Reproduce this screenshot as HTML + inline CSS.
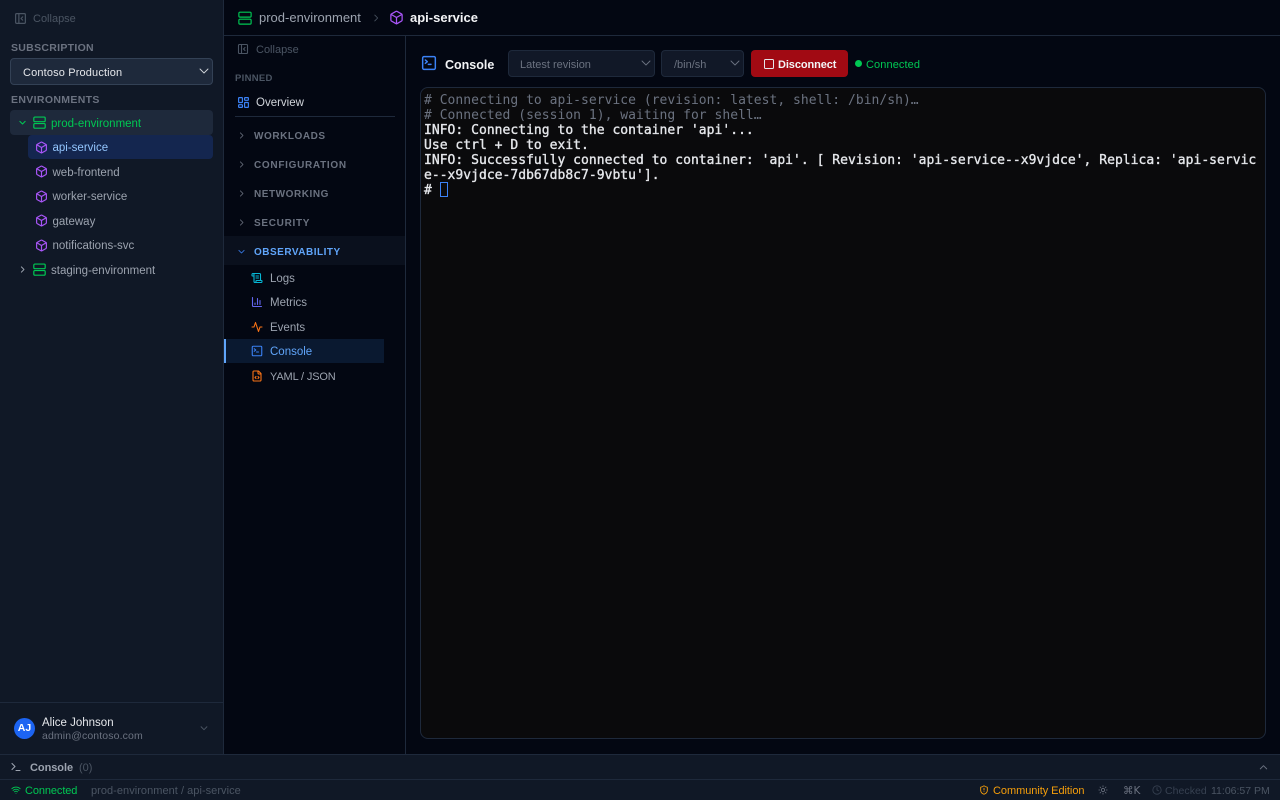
<!DOCTYPE html>
<html><head><meta charset="utf-8"><style>
html,body{margin:0;padding:0;width:1280px;height:800px;overflow:hidden;background:#030712;font-family:"Liberation Sans",sans-serif;}
.box{position:absolute;box-sizing:border-box;}
.t{position:absolute;white-space:nowrap;line-height:16px;margin-top:2px;}
svg{position:absolute;fill:none;stroke-linecap:round;stroke-linejoin:round;}
.mono{position:absolute;left:424px;font-family:"DejaVu Sans Mono",monospace;font-size:13px;line-height:15px;white-space:pre;color:#e5e7eb;-webkit-text-stroke:.35px #e5e7eb;letter-spacing:.025px;}
.g{color:#6b7280;-webkit-text-stroke:0;}
</style></head><body>
<svg width="0" height="0" style="position:absolute"><defs>
<symbol id="cube" viewBox="0 0 24 24"><path d="M21 8a2 2 0 0 0-1-1.73l-7-4a2 2 0 0 0-2 0l-7 4A2 2 0 0 0 3 8v8a2 2 0 0 0 1 1.73l7 4a2 2 0 0 0 2 0l7-4A2 2 0 0 0 21 16Z"/><path d="M3.3 7 12 12l8.7-5"/><path d="M12 22V12"/></symbol>
<symbol id="srv" viewBox="0 0 24 24"><rect x="1.5" y="2" width="21" height="8.5" rx="2"/><rect x="1.5" y="14" width="21" height="8.5" rx="2"/></symbol>
<symbol id="collapse" viewBox="0 0 24 24"><rect x="3" y="3" width="18" height="18" rx="2"/><path d="M9 3v18"/><path d="m16 15-3-3 3-3"/></symbol>
<symbol id="term" viewBox="0 0 24 24"><rect x="2.5" y="2.5" width="19" height="19" rx="2"/><path d="m6.5 7.5 3 2.5-3 2.5"/><path d="M11 14h4"/></symbol>
</defs></svg>

<!-- left sidebar -->
<div class="box" style="left:0;top:0;width:224px;height:754px;background:#101826;border-right:1px solid #1e293b"></div>
<svg style="left:14px;top:12px;stroke:#4b5563;stroke-width:2.2" width="13" height="13"><use href="#collapse"/></svg>
<div class="t" style="left:33px;top:9px;font-size:11px;color:#4b5563">Collapse</div>
<div class="t" style="left:11px;top:38px;font-size:10.5px;font-weight:700;color:#6b7280;letter-spacing:.3px">SUBSCRIPTION</div>
<div class="box" style="left:10px;top:58px;width:203px;height:27px;background:#1e293b;border:1px solid #334155;border-radius:4px"></div>
<div class="t" style="left:23px;top:63px;font-size:11px;color:#e5e7eb;letter-spacing:.15px">Contoso Production</div>
<svg style="left:198px;top:65px;stroke:#d1d5db;stroke-width:1.8" width="12" height="12" viewBox="0 0 24 24"><path d="m4 8 8 8 8-8"/></svg>
<div class="t" style="left:11px;top:90px;font-size:10.5px;font-weight:700;color:#6b7280;letter-spacing:.35px">ENVIRONMENTS</div>

<div class="box" style="left:10px;top:110px;width:203px;height:25px;background:#1e293b;border-radius:4px"></div>
<svg style="left:18px;top:118px;stroke:#00c853;stroke-width:2.8" width="9" height="9" viewBox="0 0 24 24"><path d="m5 9 7 7 7-7"/></svg>
<svg style="left:33px;top:116px;stroke:#00c853;stroke-width:2.2" width="13" height="13"><use href="#srv"/></svg>
<div class="t" style="left:51px;top:114px;font-size:11.5px;color:#00c853">prod-environment</div>

<div class="box" style="left:28px;top:135px;width:185px;height:24px;background:#14264f;border-radius:4px"></div>
<svg style="left:35px;top:141px;stroke:#a855f7;stroke-width:2.2" width="13" height="13"><use href="#cube"/></svg>
<div class="t" style="left:52.5px;top:138px;font-size:11.5px;color:#93c5fd">api-service</div>
<svg style="left:35px;top:165px;stroke:#a855f7;stroke-width:2.2" width="13" height="13"><use href="#cube"/></svg>
<div class="t" style="left:52.5px;top:163px;font-size:11.5px;color:#9ca3af">web-frontend</div>
<svg style="left:35px;top:190px;stroke:#a855f7;stroke-width:2.2" width="13" height="13"><use href="#cube"/></svg>
<div class="t" style="left:52.5px;top:187px;font-size:11.5px;color:#9ca3af">worker-service</div>
<svg style="left:35px;top:214px;stroke:#a855f7;stroke-width:2.2" width="13" height="13"><use href="#cube"/></svg>
<div class="t" style="left:52.5px;top:212px;font-size:11.5px;color:#9ca3af">gateway</div>
<svg style="left:35px;top:239px;stroke:#a855f7;stroke-width:2.2" width="13" height="13"><use href="#cube"/></svg>
<div class="t" style="left:52.5px;top:236px;font-size:11.5px;color:#9ca3af">notifications-svc</div>
<svg style="left:18px;top:265px;stroke:#9ca3af;stroke-width:2.4" width="9" height="9" viewBox="0 0 24 24"><path d="m9 5 7 7-7 7"/></svg>
<svg style="left:33px;top:263px;stroke:#00c853;stroke-width:2.2" width="13" height="13"><use href="#srv"/></svg>
<div class="t" style="left:51px;top:261px;font-size:11.5px;color:#9ca3af">staging-environment</div>

<div class="box" style="left:0;top:702px;width:223px;height:1px;background:#1e293b"></div>
<div class="box" style="left:14px;top:718px;width:21px;height:21px;border-radius:50%;background:#1c64f2;color:#fff;font-size:10.5px;font-weight:700;text-align:center;line-height:21px">AJ</div>
<div class="t" style="left:42px;top:713px;font-size:11.5px;color:#e5e7eb">Alice Johnson</div>
<div class="t" style="left:42px;top:726px;font-size:10.5px;color:#6b7280;letter-spacing:.12px">admin@contoso.com</div>
<svg style="left:199px;top:723px;stroke:#4b5563;stroke-width:2.2" width="10" height="10" viewBox="0 0 24 24"><path d="m5 9 7 7 7-7"/></svg>

<!-- header -->
<div class="box" style="left:224px;top:35px;width:1056px;height:1px;background:#1e293b"></div>
<svg style="left:238px;top:11px;stroke:#00c853;stroke-width:2" width="14" height="14"><use href="#srv"/></svg>
<div class="t" style="left:259px;top:8px;font-size:13px;color:#9ca3af">prod-environment</div>
<svg style="left:371px;top:13px;stroke:#4b5563;stroke-width:2" width="10" height="10" viewBox="0 0 24 24"><path d="m9 5 7 7-7 7"/></svg>
<svg style="left:389px;top:10px;stroke:#a855f7;stroke-width:2" width="15" height="15"><use href="#cube"/></svg>
<div class="t" style="left:410px;top:8px;font-size:13px;font-weight:700;color:#f3f4f6">api-service</div>

<!-- nav column -->
<div class="box" style="left:405px;top:36px;width:1px;height:718px;background:#1e293b"></div>
<svg style="left:237px;top:43px;stroke:#4b5563;stroke-width:2.2" width="12" height="12"><use href="#collapse"/></svg>
<div class="t" style="left:256px;top:40px;font-size:11px;color:#4b5563">Collapse</div>
<div class="t" style="left:235px;top:69px;font-size:9.5px;font-weight:700;color:#4b5563;letter-spacing:.3px">PINNED</div>
<svg style="left:237px;top:96px;stroke:#3b82f6;stroke-width:2.2" width="13" height="13" viewBox="0 0 24 24"><rect x="3" y="3" width="7" height="9" rx="1"/><rect x="14" y="3" width="7" height="5" rx="1"/><rect x="14" y="12" width="7" height="9" rx="1"/><rect x="3" y="16" width="7" height="5" rx="1"/></svg>
<div class="t" style="left:256px;top:93px;font-size:11.5px;color:#d1d5db">Overview</div>
<div class="box" style="left:235px;top:116px;width:160px;height:1px;background:#1e293b"></div>

<svg style="left:237px;top:131px;stroke:#6b7280;stroke-width:2.2" width="9" height="9" viewBox="0 0 24 24"><path d="m9 5 7 7-7 7"/></svg>
<div class="t" style="left:254px;top:126.5px;font-size:10px;font-weight:700;color:#6b7280;letter-spacing:.55px">WORKLOADS</div>
<svg style="left:237px;top:160px;stroke:#6b7280;stroke-width:2.2" width="9" height="9" viewBox="0 0 24 24"><path d="m9 5 7 7-7 7"/></svg>
<div class="t" style="left:254px;top:155.5px;font-size:10px;font-weight:700;color:#6b7280;letter-spacing:.7px">CONFIGURATION</div>
<svg style="left:237px;top:189px;stroke:#6b7280;stroke-width:2.2" width="9" height="9" viewBox="0 0 24 24"><path d="m9 5 7 7-7 7"/></svg>
<div class="t" style="left:254px;top:184.5px;font-size:10px;font-weight:700;color:#6b7280;letter-spacing:.55px">NETWORKING</div>
<svg style="left:237px;top:218px;stroke:#6b7280;stroke-width:2.2" width="9" height="9" viewBox="0 0 24 24"><path d="m9 5 7 7-7 7"/></svg>
<div class="t" style="left:254px;top:213.5px;font-size:10px;font-weight:700;color:#6b7280;letter-spacing:.7px">SECURITY</div>

<div class="box" style="left:224px;top:236px;width:181px;height:29px;background:#0a101d"></div>
<svg style="left:237px;top:247px;stroke:#3b82f6;stroke-width:2.2" width="9" height="9" viewBox="0 0 24 24"><path d="m5 9 7 7 7-7"/></svg>
<div class="t" style="left:254px;top:242.5px;font-size:10px;font-weight:700;color:#60a5fa;letter-spacing:.5px">OBSERVABILITY</div>

<svg style="left:251px;top:272px;stroke:#06b6d4;stroke-width:2.2" width="12" height="12" viewBox="0 0 24 24"><path d="M15 12h-5"/><path d="M15 8h-5"/><path d="M19 17V5a2 2 0 0 0-2-2H4"/><path d="M8 21h12a2 2 0 0 0 2-2v-1a1 1 0 0 0-1-1H11a1 1 0 0 0-1 1v1a2 2 0 1 1-4 0V5a2 2 0 1 0-4 0v2a1 1 0 0 0 1 1h3"/></svg>
<div class="t" style="left:270px;top:269px;font-size:11.5px;color:#9ca3af">Logs</div>
<svg style="left:251px;top:296px;stroke:#6366f1;stroke-width:2.2" width="12" height="12" viewBox="0 0 24 24"><path d="M3 3v16a2 2 0 0 0 2 2h16"/><path d="M18 17V9"/><path d="M13 17V5"/><path d="M8 17v-3"/></svg>
<div class="t" style="left:270px;top:293px;font-size:11.5px;color:#9ca3af">Metrics</div>
<svg style="left:251px;top:321px;stroke:#f97316;stroke-width:2.2" width="12" height="12" viewBox="0 0 24 24"><path d="M22 12h-4l-3 9L9 3l-3 9H2"/></svg>
<div class="t" style="left:270px;top:318px;font-size:11.5px;color:#9ca3af">Events</div>
<div class="box" style="left:224px;top:339px;width:160px;height:24px;background:#0a1930;border-left:2px solid #60a5fa"></div>
<svg style="left:251px;top:345px;stroke:#3b82f6;stroke-width:2.2" width="12" height="12"><use href="#term"/></svg>
<div class="t" style="left:270px;top:342px;font-size:11.5px;color:#60a5fa">Console</div>
<svg style="left:251px;top:370px;stroke:#f97316;stroke-width:2.2" width="12" height="12" viewBox="0 0 24 24"><path d="M15 2H6a2 2 0 0 0-2 2v16a2 2 0 0 0 2 2h12a2 2 0 0 0 2-2V7Z"/><path d="M14 2v4a2 2 0 0 0 2 2h4"/><path d="m10 13-2 2 2 2"/><path d="m14 17 2-2-2-2"/></svg>
<div class="t" style="left:270px;top:367px;font-size:11px;color:#9ca3af;letter-spacing:-.15px">YAML / JSON</div>

<!-- toolbar -->
<svg style="left:421px;top:55px;stroke:#3b82f6;stroke-width:2.2" width="16" height="16"><use href="#term"/></svg>
<div class="t" style="left:445px;top:54.5px;font-size:12.5px;font-weight:700;color:#f3f4f6">Console</div>
<div class="box" style="left:508px;top:50px;width:147px;height:27px;background:#111827;border:1px solid #1e293b;border-radius:4px"></div>
<div class="t" style="left:520px;top:55px;font-size:11px;color:#6b7280">Latest revision</div>
<svg style="left:640px;top:57px;stroke:#6b7280;stroke-width:1.8" width="12" height="12" viewBox="0 0 24 24"><path d="m4 8 8 8 8-8"/></svg>
<div class="box" style="left:661px;top:50px;width:83px;height:27px;background:#111827;border:1px solid #1e293b;border-radius:4px"></div>
<div class="t" style="left:674px;top:55px;font-size:11px;color:#6b7280">/bin/sh</div>
<svg style="left:729px;top:57px;stroke:#6b7280;stroke-width:1.8" width="12" height="12" viewBox="0 0 24 24"><path d="m4 8 8 8 8-8"/></svg>
<div class="box" style="left:751px;top:50px;width:97px;height:27px;background:#a10a13;border-radius:4px"></div>
<div class="box" style="left:764px;top:59px;width:10px;height:10px;border:1px solid #e5e7eb;border-radius:1.5px"></div>
<div class="t" style="left:778px;top:55px;font-size:11px;font-weight:700;color:#f3f4f6;letter-spacing:-.1px">Disconnect</div>
<div class="box" style="left:855px;top:60px;width:7px;height:7px;border-radius:50%;background:#00c853"></div>
<div class="t" style="left:866px;top:55px;font-size:11px;color:#00c853;letter-spacing:.1px">Connected</div>

<!-- terminal -->
<div class="box" style="left:420px;top:87px;width:846px;height:652px;background:#0a0a0c;border:1px solid #1e293b;border-radius:8px"></div>
<div class="mono g" style="top:93px"># Connecting to api-service (revision: latest, shell: /bin/sh)…</div>
<div class="mono g" style="top:108px"># Connected (session 1), waiting for shell…</div>
<div class="mono" style="top:123px">INFO: Connecting to the container 'api'...</div>
<div class="mono" style="top:138px">Use ctrl + D to exit.</div>
<div class="mono" style="top:153px">INFO: Successfully connected to container: 'api'. [ Revision: 'api-service--x9vjdce', Replica: 'api-servic</div>
<div class="mono" style="top:168px">e--x9vjdce-7db67db8c7-9vbtu'].</div>
<div class="mono" style="top:183px">#</div>
<div class="box" style="left:440px;top:182px;width:8px;height:15px;border:1px solid #3b82f6"></div>

<!-- bottom -->
<div class="box" style="left:0;top:754px;width:1280px;height:26px;background:#101826;border-top:1px solid #1e293b;border-bottom:1px solid #1e293b"></div>
<svg style="left:10px;top:761px;stroke:#9ca3af;stroke-width:2.2" width="12" height="12" viewBox="0 0 24 24"><path d="m4 17 6-6-6-6"/><path d="M12 19h8"/></svg>
<div class="t" style="left:30px;top:758px;font-size:11px;font-weight:700;color:#9ca3af;letter-spacing:-.05px">Console</div>
<div class="t" style="left:79px;top:758px;font-size:11px;color:#4b5563">(0)</div>
<svg style="left:1258px;top:762px;stroke:#6b7280;stroke-width:2" width="11" height="11" viewBox="0 0 24 24"><path d="m5 15 7-7 7 7"/></svg>

<div class="box" style="left:0;top:780px;width:1280px;height:20px;background:#101826"></div>
<svg style="left:11px;top:785px;stroke:#00c853;stroke-width:2.2" width="10" height="10" viewBox="0 0 24 24"><path d="M12 20h.01"/><path d="M2 8.8a15 15 0 0 1 20 0"/><path d="M5 12.9a10 10 0 0 1 14 0"/><path d="M8.5 16.4a5 5 0 0 1 7 0"/></svg>
<div class="t" style="left:25px;top:781px;font-size:11px;color:#00c853;letter-spacing:-.1px">Connected</div>
<div class="t" style="left:91px;top:781px;font-size:11px;color:#4b5563;letter-spacing:.04px">prod-environment / api-service</div>
<svg style="left:979px;top:785px;stroke:#f59e0b;stroke-width:2.2" width="10" height="10" viewBox="0 0 24 24"><path d="M20 13c0 5-3.5 7.5-7.66 8.95a1 1 0 0 1-.67-.01C7.5 20.5 4 18 4 13V6a1 1 0 0 1 1-1c2 0 4.5-1.2 6.24-2.72a1.17 1.17 0 0 1 1.52 0C14.51 3.81 17 5 19 5a1 1 0 0 1 1 1z"/><path d="M12 8v4"/><path d="M12 16h.01"/></svg>
<div class="t" style="left:993px;top:781px;font-size:11px;color:#f59e0b;letter-spacing:-.05px">Community Edition</div>
<svg style="left:1098px;top:785px;stroke:#6b7280;stroke-width:2" width="10" height="10" viewBox="0 0 24 24"><circle cx="12" cy="12" r="4"/><path d="M12 2v2M12 20v2M4.9 4.9l1.4 1.4M17.7 17.7l1.4 1.4M2 12h2M20 12h2M6.3 17.7l-1.4 1.4M19.1 4.9l-1.4 1.4"/></svg>
<div class="t" style="left:1123px;top:781px;font-size:10.5px;color:#6b7280;font-family:'DejaVu Sans',sans-serif">⌘K</div>
<svg style="left:1152px;top:785px;stroke:#374151;stroke-width:2" width="10" height="10" viewBox="0 0 24 24"><circle cx="12" cy="12" r="10"/><path d="M12 6v6l4 2"/></svg>
<div class="t" style="left:1165px;top:781px;font-size:10.5px;color:#374151;letter-spacing:.05px">Checked</div>
<div class="t" style="left:1211px;top:781px;font-size:10.5px;color:#4b5563">11:06:57 PM</div>
</body></html>
